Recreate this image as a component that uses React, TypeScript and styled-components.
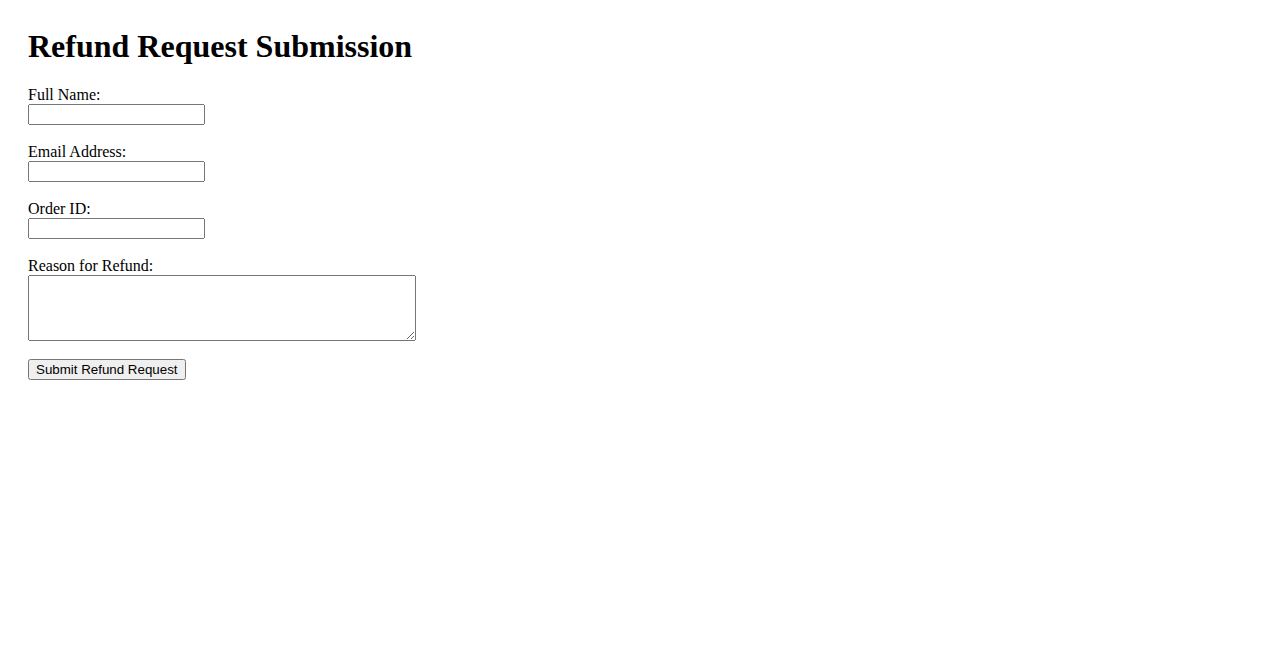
import React from "react";
import styled, { createGlobalStyle } from "styled-components";

const GlobalStyle = createGlobalStyle`
  html, body {
    margin: 0;
    padding: 0;
    background: #ffffff;
  }
  body {
    font-family: "Liberation Serif", "Times New Roman", serif;
    font-size: 16px;
    color: #000000;
  }
`;

const Page = styled.main`
  padding: 28px;
`;

const Title = styled.h1`
  margin: 0 0 21px 0;
  font-family: "Liberation Serif", "Times New Roman", serif;
  font-size: 32px;
  font-weight: bold;
  line-height: 36px;
`;

const Form = styled.form`
  display: flex;
  flex-direction: column;
  align-items: flex-start;
`;

const Field = styled.div<{ $gap: number }>`
  display: flex;
  flex-direction: column;
  align-items: flex-start;
  margin-bottom: ${(p) => p.$gap}px;
`;

const Label = styled.label`
  display: block;
  font-family: "Liberation Serif", "Times New Roman", serif;
  font-size: 16px;
  line-height: 19px;
`;

const TextInput = styled.input`
  box-sizing: border-box;
  width: 177px;
  height: 21px;
  margin: 0;
  padding: 1px 2px;
  font-family: "Liberation Sans", Arial, sans-serif;
  font-size: 13.333px;
`;

const TextArea = styled.textarea`
  box-sizing: border-box;
  width: 388px;
  height: 66px;
  margin: 0;
  padding: 2px;
  font-family: "Liberation Mono", "Courier New", monospace;
  font-size: 13.333px;
  display: block;
`;

const SubmitButton = styled.button`
  box-sizing: border-box;
  height: 21px;
  margin: 0;
  padding: 1px 6px;
  font-family: "Liberation Sans", Arial, sans-serif;
  font-size: 13.333px;
  line-height: 15px;
`;

export default function App() {
  return (
    <>
      <GlobalStyle />
      <Page>
        <Title>Refund Request Submission</Title>
        <Form onSubmit={(e) => e.preventDefault()}>
          <Field $gap={17}>
            <Label htmlFor="fullName">Full Name:</Label>
            <TextInput id="fullName" type="text" />
          </Field>
          <Field $gap={17}>
            <Label htmlFor="email">Email Address:</Label>
            <TextInput id="email" type="email" />
          </Field>
          <Field $gap={17}>
            <Label htmlFor="orderId">Order ID:</Label>
            <TextInput id="orderId" type="text" />
          </Field>
          <Field $gap={18}>
            <Label htmlFor="reason">Reason for Refund:</Label>
            <TextArea id="reason" />
          </Field>
          <SubmitButton type="submit">Submit Refund Request</SubmitButton>
        </Form>
      </Page>
    </>
  );
}
